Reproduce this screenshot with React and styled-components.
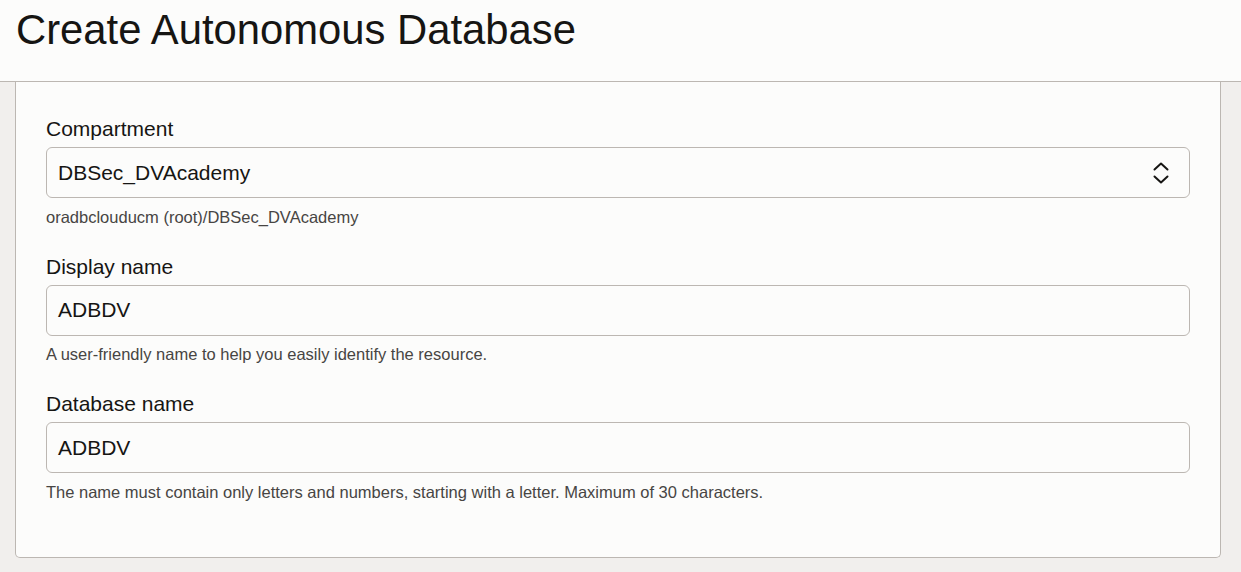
import React from 'react';
import styled, { createGlobalStyle } from 'styled-components';

const GlobalStyle = createGlobalStyle`
  html, body {
    margin: 0;
    padding: 0;
    background: #f1efed;
    font-family: "Liberation Sans", Arial, sans-serif;
    color: #161513;
  }
`;

const Page = styled.div`
  width: 1241px;
  height: 572px;
  overflow: hidden;
  display: flex;
  flex-direction: column;
`;

const Header = styled.header`
  height: 81px;
  background: #fcfcfb;
  border-bottom: 1px solid #bcb7b2;
  padding: 0 16px;
  box-sizing: content-box;
`;

const Title = styled.h1`
  margin: 0;
  font-weight: normal;
  font-size: 41.8px;
  line-height: 60px;
  color: #161513;
`;

const Body = styled.main`
  padding: 0 20px 0 15px;
`;

const Card = styled.section`
  background: #fcfcfb;
  border: 1px solid #bcb7b2;
  border-top: none;
  border-radius: 0 0 5px 5px;
  padding: 35px 30px 55px;
  display: flex;
  flex-direction: column;
  gap: 28px;
`;

const Field = styled.div`
  display: flex;
  flex-direction: column;
`;

const Label = styled.label`
  font-size: 21px;
  line-height: 24px;
  margin-bottom: 6px;
`;

const Box = styled.div`
  height: 51px;
  box-sizing: border-box;
  border: 1px solid #bcb7b2;
  border-radius: 6px;
  background: #fcfcfb;
  display: flex;
  align-items: center;
  justify-content: space-between;
  padding: 0 20px 0 11px;
  font-size: 21px;
`;

const Help = styled.div`
  margin-top: 8.5px;
  font-size: 16.5px;
  line-height: 20px;
  color: #474543;
`;

const Chevrons = () => (
  <svg width="16" height="24" viewBox="0 0 16 24" fill="none" stroke="#161513" strokeWidth="2" strokeLinecap="round" strokeLinejoin="round">
    <path d="M1.5 8.5 L8 2.5 L14.5 8.5" />
    <path d="M1.5 15.5 L8 21.5 L14.5 15.5" />
  </svg>
);

const fields = [
  { label: 'Compartment', value: 'DBSec_DVAcademy', help: 'oradbclouducm (root)/DBSec_DVAcademy', select: true },
  { label: 'Display name', value: 'ADBDV', help: 'A user-friendly name to help you easily identify the resource.' },
  { label: 'Database name', value: 'ADBDV', help: 'The name must contain only letters and numbers, starting with a letter. Maximum of 30 characters.' },
];

export default function App() {
  return (
    <Page>
      <GlobalStyle />
      <Header>
        <Title>Create Autonomous Database</Title>
      </Header>
      <Body>
        <Card>
          {fields.map(f => (
            <Field key={f.label}>
              <Label>{f.label}</Label>
              <Box>
                <span>{f.value}</span>
                {f.select && <Chevrons />}
              </Box>
              <Help>{f.help}</Help>
            </Field>
          ))}
        </Card>
      </Body>
    </Page>
  );
}
